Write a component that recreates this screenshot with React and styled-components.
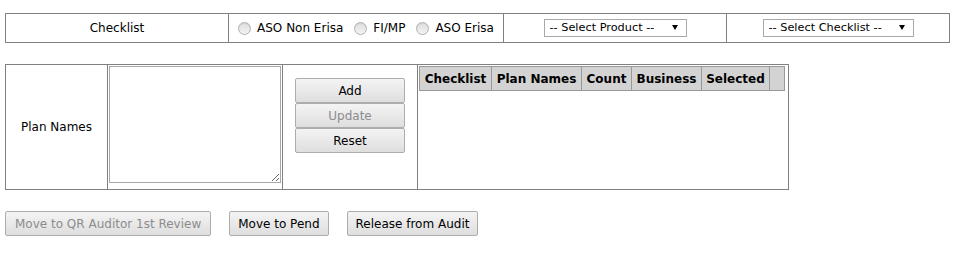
import React from 'react';
import styled, { createGlobalStyle } from 'styled-components';

const GlobalStyle = createGlobalStyle`
  html, body { margin: 0; padding: 0; background: #fff; }
  body {
    font-family: "DejaVu Sans", Verdana, sans-serif;
    font-size: 12px;
    color: #000;
  }
  *, *::before, *::after { box-sizing: border-box; }
`;

const Page = styled.div`
  padding: 13px 0 0 5px;
  display: flex;
  flex-direction: column;
  align-items: flex-start;
`;

const FilterBar = styled.div`
  display: grid;
  grid-template-columns: 222px 275px 223px 223px;
  width: 945px;
  height: 30px;
  border: 1px solid #808080;
`;

const Cell = styled.div`
  display: flex;
  align-items: ${(p) => p.$align || 'center'};
  justify-content: ${(p) => p.$justify || 'center'};
  padding: ${(p) => p.$pad || '0'};
  min-width: 0;
  & + & { border-left: 1px solid #808080; }
`;

const RadioGroup = styled.div`
  display: flex;
  align-items: center;
  gap: 11px;
`;

const RadioLabel = styled.label`
  display: flex;
  align-items: center;
  gap: 6px;
  white-space: nowrap;
`;

const Radio = styled.input.attrs({ type: 'radio' })`
  appearance: none;
  -webkit-appearance: none;
  margin: 0;
  width: 13px;
  height: 13px;
  border-radius: 50%;
  border: 1px solid #b0b0b0;
  background: linear-gradient(180deg, #dedede 0%, #f3f3f3 100%);
  box-shadow: inset 0 1px 1px rgba(0,0,0,0.06);
`;

const SelectWrap = styled.div`
  position: relative;
  display: inline-flex;
`;

const Select = styled.select`
  appearance: none;
  -webkit-appearance: none;
  width: ${(p) => p.$w}px;
  height: 18px;
  margin: 0;
  padding: 0 18px 0 5px;
  border: 1px solid #a9a9a9;
  border-radius: 0;
  background: #fff;
  color: #000;
  font-family: "DejaVu Sans", Verdana, sans-serif;
  font-size: 11.3px;
  line-height: 16px;
`;

const Arrow = styled.svg`
  position: absolute;
  right: 9px;
  top: 6px;
  width: 6px;
  height: 5px;
  pointer-events: none;
`;

const PlanGrid = styled.div`
  margin-top: 21px;
  display: grid;
  grid-template-columns: 101px 175px 135px 371px;
  width: 784px;
  height: 126px;
  border: 1px solid #808080;
`;

const PlanText = styled.textarea`
  width: 172px;
  height: 117px;
  margin: 0;
  border: 1px solid #a9a9a9;
  font-family: "DejaVu Sans", Verdana, sans-serif;
  font-size: 12px;
`;

const ButtonStack = styled.div`
  display: flex;
  flex-direction: column;
  gap: 0;
`;

const Button = styled.button`
  height: ${(p) => p.$h || 25}px;
  width: ${(p) => (p.$w ? `${p.$w}px` : 'auto')};
  margin: 0;
  padding: 0 ${(p) => p.$px ?? 8}px;
  border: 1px solid #adadad;
  border-radius: 2px;
  background: linear-gradient(180deg, #f4f4f4 0%, #dedede 100%);
  color: #000;
  font-family: "DejaVu Sans", Verdana, sans-serif;
  font-size: 12px;
  white-space: nowrap;
  &:disabled { color: #8c8c8c; }
`;

const ResultHeader = styled.div`
  display: grid;
  grid-template-columns: 72px 90px 50px 70px 68px 15px;
  width: 366px;
  height: 25px;
  border: 1px solid #999;
  border-right: none;
  background: #d3d3d3;
`;

const HeadCell = styled.div`
  display: flex;
  align-items: center;
  justify-content: center;
  border-right: 1px solid #999;
  font-weight: bold;
  font-size: 12px;
  white-space: nowrap;
  color: #000;
`;

const ActionBar = styled.div`
  margin-top: 21px;
  display: flex;
  gap: 18px;
`;

function DropDown({ width, label }) {
  return (
    <SelectWrap>
      <Select $w={width} defaultValue="">
        <option value="">{label}</option>
      </Select>
      <Arrow viewBox="0 0 6 5">
        <path d="M0 0 L6 0 L3 5 Z" fill="#000" />
      </Arrow>
    </SelectWrap>
  );
}

export default function App() {
  const headers = ['Checklist', 'Plan Names', 'Count', 'Business', 'Selected', ''];
  return (
    <>
      <GlobalStyle />
      <Page>
        <FilterBar>
          <Cell>Checklist</Cell>
          <Cell>
            <RadioGroup>
              <RadioLabel><Radio name="biz" />ASO Non Erisa</RadioLabel>
              <RadioLabel><Radio name="biz" />FI/MP</RadioLabel>
              <RadioLabel><Radio name="biz" />ASO Erisa</RadioLabel>
            </RadioGroup>
          </Cell>
          <Cell>
            <DropDown width={143} label="-- Select Product --" />
          </Cell>
          <Cell>
            <DropDown width={151} label="-- Select Checklist --" />
          </Cell>
        </FilterBar>

        <PlanGrid>
          <Cell>Plan Names</Cell>
          <Cell $align="flex-start" $justify="flex-start" $pad="1px">
            <PlanText />
          </Cell>
          <Cell $align="flex-start" $pad="13px 0 0 0">
            <ButtonStack>
              <Button $w={110}>Add</Button>
              <Button $w={110} disabled>Update</Button>
              <Button $w={110}>Reset</Button>
            </ButtonStack>
          </Cell>
          <Cell $align="flex-start" $justify="flex-start" $pad="1px">
            <ResultHeader>
              {headers.map((h, i) => (
                <HeadCell key={i}>{h}</HeadCell>
              ))}
            </ResultHeader>
          </Cell>
        </PlanGrid>

        <ActionBar>
          <Button disabled $px={9}>Move to QR Auditor 1st Review</Button>
          <Button>Move to Pend</Button>
          <Button>Release from Audit</Button>
        </ActionBar>
      </Page>
    </>
  );
}
